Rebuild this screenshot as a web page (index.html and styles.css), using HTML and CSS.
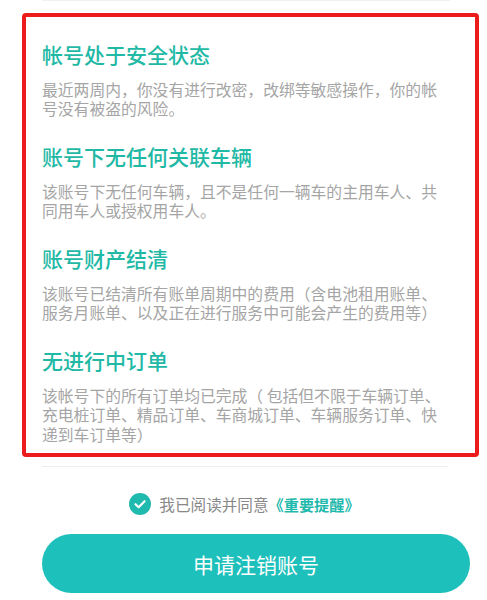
FILE: index.html
```html
<!DOCTYPE html>
<html>
    <head>
        <title>注销账号</title>

        <link rel="stylesheet" href="styles.css">
    </head>

    <body>
        <div class="top-line"></div>

        <div class="notice-box">
            <div class="notice-item">
                <h3 class="notice-title">帐号处于安全状态</h3>
                <p class="notice-text">最近两周内，你没有进行改密，改绑等敏感操作，你的帐号没有被盗的风险。</p>
            </div>

            <div class="notice-item">
                <h3 class="notice-title">账号下无任何关联车辆</h3>
                <p class="notice-text">该账号下无任何车辆，且不是任何一辆车的主用车人、共同用车人或授权用车人。</p>
            </div>

            <div class="notice-item">
                <h3 class="notice-title">账号财产结清</h3>
                <p class="notice-text">该账号已结清所有账单周期中的费用（含电池租用账单、服务月账单、以及正在进行服务中可能会产生的费用等）</p>
            </div>

            <div class="notice-item">
                <h3 class="notice-title">无进行中订单</h3>
                <p class="notice-text">该帐号下的所有订单均已完成（ 包括但不限于车辆订单、充电桩订单、精品订单、车商城订单、车辆服务订单、快递到车订单等）</p>
            </div>
        </div>

        <div class="divider"></div>

        <div class="agree-row">
            <span class="check-icon">
                <svg width="22" height="22" viewBox="0 0 22 22">
                    <circle cx="11" cy="11" r="11" fill="#1fb9ad"/>
                    <path d="M6.5 11.2 L9.6 14.2 L15.6 8.2" fill="none" stroke="#fff" stroke-width="2.2" stroke-linecap="round" stroke-linejoin="round"/>
                </svg>
            </span>
            <span class="agree-text">我已阅读并同意</span>
            <span class="agree-link">《重要提醒》</span>
        </div>

        <div class="btn-row">
            <button class="cancel-btn">申请注销账号</button>
        </div>
    </body>
</html>
```

FILE: styles.css
```css
body {
    margin: 0;
    font-family: "Noto Sans CJK SC", "Noto Sans", sans-serif;

    color: rgb(153, 153, 153);
    background-color: white;
}

.top-line {
    height: 1px;
    margin: 0 37px 0 42px;
    background-color: rgb(240, 240, 240);
}

.notice-box {
    margin: 12px 8px 0 22px;
    padding: 23px 30px 9px 16px;

    border: 4px solid rgb(236, 28, 28);
    border-radius: 4px;
}

.notice-item {
    margin-bottom: 23.5px;
}

.notice-item:last-child {
    margin-bottom: 0;
}

.notice-title {
    margin: 0 0 11.5px 0;
    font-size: 21px;
    font-weight: 500;
    line-height: 28px;
    color: rgb(31, 185, 166);
}

.notice-text {
    margin: 0;
    font-size: 15.8px;
    line-height: 19.5px;
    color: rgb(165, 165, 165);
}

.divider {
    height: 1px;
    margin: 9px 39px 0 42px;
    background-color: rgb(238, 238, 238);
}

.agree-row {
    display: flex;
    align-items: center;
    justify-content: center;
    gap: 8px;
    margin-top: 26px;
    padding-left: 2px;
}

.check-icon {
    display: flex;
    width: 22px;
    height: 22px;
}

.agree-text {
    font-size: 15.6px;
    color: rgb(136, 136, 136);
}

.agree-link {
    margin-left: -8px;
    font-size: 15.2px;
    font-weight: bold;
    color: rgb(31, 185, 173);
}

.btn-row {
    padding: 19px 17px 0 42px;
}

.cancel-btn {
    width: 100%;
    height: 59px;

    border: none;
    border-radius: 30px;
    background-color: rgb(29, 192, 187);

    font-family: "Noto Sans CJK SC", sans-serif;
    font-size: 21px;
    color: white;
}
```
